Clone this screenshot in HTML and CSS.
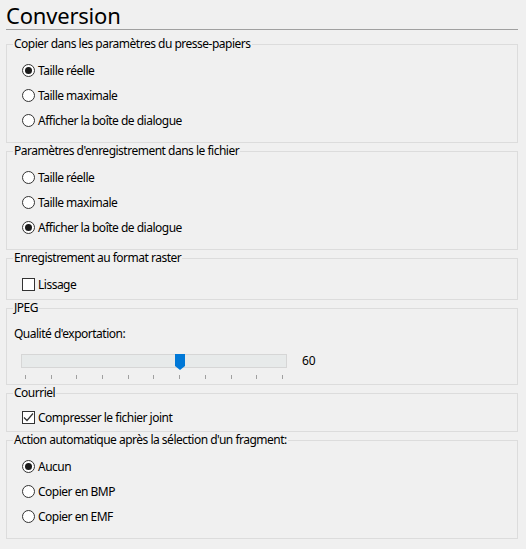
FILE: index.html
```html
<!DOCTYPE html>
<html lang="fr">
<head>
<meta charset="utf-8">
<title>Conversion</title>
<link rel="stylesheet" href="styles.css">
</head>
<body>
<div class="page">
  <h1 class="title">Conversion</h1>

  <fieldset class="group g-radio">
    <legend>Copier dans les paramètres du presse-papiers</legend>
    <div class="row"><span class="radio on"></span><span>Taille réelle</span></div>
    <div class="row"><span class="radio"></span><span>Taille maximale</span></div>
    <div class="row"><span class="radio"></span><span>Afficher la boîte de dialogue</span></div>
  </fieldset>

  <fieldset class="group g-radio">
    <legend>Paramètres d'enregistrement dans le fichier</legend>
    <div class="row"><span class="radio"></span><span>Taille réelle</span></div>
    <div class="row"><span class="radio"></span><span>Taille maximale</span></div>
    <div class="row"><span class="radio on"></span><span>Afficher la boîte de dialogue</span></div>
  </fieldset>

  <fieldset class="group g-check">
    <legend>Enregistrement au format raster</legend>
    <div class="row"><span class="check"></span><span>Lissage</span></div>
  </fieldset>

  <fieldset class="group g-jpeg">
    <legend>JPEG</legend>
    <div class="label">Qualité d'exportation:</div>
    <div class="slider-row">
      <div class="slider">
        <div class="track">
          <span class="thumb"><svg width="10" height="16" viewBox="0 0 10 16"><path d="M0 0H10V12L5 16L0 12Z" fill="#0078d7"/></svg></span>
        </div>
        <div class="ticks">
          <i></i><i></i><i></i><i></i><i></i><i></i><i></i><i></i><i></i><i></i><i></i>
        </div>
      </div>
      <span class="value">60</span>
    </div>
  </fieldset>

  <fieldset class="group g-check g-mail">
    <legend>Courriel</legend>
    <div class="row"><span class="check on"><svg width="11" height="11" viewBox="0 0 11 11"><path d="M1 5.5L4 8.5L10 1.5" fill="none" stroke="#333" stroke-width="1.2"/></svg></span><span>Compresser le fichier joint</span></div>
  </fieldset>

  <fieldset class="group g-radio">
    <legend>Action automatique après la sélection d'un fragment:</legend>
    <div class="row"><span class="radio on"></span><span>Aucun</span></div>
    <div class="row"><span class="radio"></span><span>Copier en BMP</span></div>
    <div class="row"><span class="radio"></span><span>Copier en EMF</span></div>
  </fieldset>
</div>
</body>
</html>
```
FILE: styles.css
```css
html, body {
  margin: 0;
  padding: 0;
  background: #f0f0f0;
}
body {
  font-family: "Noto Sans", "Open Sans", sans-serif;
  font-size: 12px;
  letter-spacing: -0.5px;
  color: #000;
}
.page {
  width: 512px;
  padding: 0 8px 0 6px;
}
.title {
  margin: 0;
  font-size: 22px;
  font-weight: normal;
  line-height: 28px;
  height: 28px;
  padding-top: 1px;
  border-bottom: 1px solid #a0a0a0;
  margin-bottom: 6px;
  letter-spacing: -0.2px;
}
.group {
  margin: 0;
  border: 1px solid #dcdcdc;
  padding: 6px 0 8px 6px;
  min-width: 0;
}
.group legend {
  padding: 0 1px;
  margin: 0;
  line-height: 16px;
  height: 16px;
}
.g-radio { padding-bottom: 9px; }
.g-check { padding-bottom: 2px; }
.g-mail { padding-top: 4px; padding-bottom: 1px; }
.row {
  display: flex;
  align-items: center;
  height: 25px;
  gap: 3px;
  padding-left: 9px;
}
.radio {
  width: 11px;
  height: 11px;
  border: 1px solid #333;
  border-radius: 50%;
  background: #fff;
  position: relative;
  flex: none;
}
.radio.on::after {
  content: "";
  position: absolute;
  left: 2px;
  top: 2px;
  width: 7px;
  height: 7px;
  border-radius: 50%;
  background: #1a1a1a;
}
.check {
  width: 11px;
  height: 11px;
  border: 1px solid #333;
  background: #fff;
  flex: none;
  display: flex;
}
.g-jpeg {
  padding: 6px 0 5px 6px;
}
.label {
  line-height: 16px;
  height: 16px;
  margin-top: 4px;
  padding-left: 1px;
}
.slider-row {
  display: flex;
  align-items: flex-start;
  margin-top: 12px;
}
.slider {
  margin-left: 8px;
  width: 266px;
}
.track {
  position: relative;
  height: 14px;
  box-sizing: border-box;
  border: 1px solid #d6d6d6;
  background: #e7eaea;
}
.thumb {
  position: absolute;
  left: 153px;
  top: -1px;
  line-height: 0;
}
.ticks {
  display: flex;
  justify-content: space-between;
  margin: 7px 4px 0 4px;
  height: 4px;
}
.ticks i {
  width: 1px;
  height: 4px;
  background: #a0a0a0;
}
.value {
  margin-left: 15px;
  line-height: 14px;
  letter-spacing: 0;
}
```
